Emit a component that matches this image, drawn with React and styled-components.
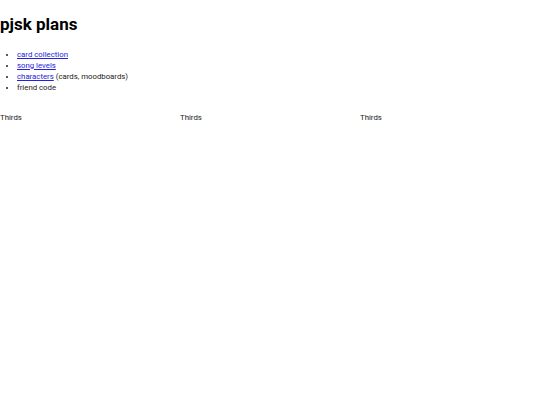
import React from "react";
import styled, { createGlobalStyle } from "styled-components";

const Global = createGlobalStyle`
  html, body { margin: 0; padding: 0; background: #fff; }
  body {
    font-family: Roboto, "DejaVu Sans", sans-serif;
    font-size: 7.8px;
    color: #222;
  }
`;

const Title = styled.h1`
  margin: 14px 0 0 0;
  font-size: 17px;
  font-weight: bold;
  line-height: 20px;
  color: #000;
`;

const List = styled.ul`
  margin: 15px 0 0 0;
  padding-left: 17px;
  line-height: 11px;
`;

const Item = styled.li``;

const Link = styled.a`
  color: #2222dd;
  text-decoration: underline;
`;

const Thirds = styled.div`
  display: grid;
  grid-template-columns: 1fr 1fr 1fr;
  margin-top: 19px;
  line-height: 11px;
`;

const Col = styled.div``;

export default function App() {
  return (
    <>
      <Global />
      <Title>pjsk plans</Title>
      <List>
        <Item><Link href="#">card collection</Link></Item>
        <Item><Link href="#">song levels</Link></Item>
        <Item><Link href="#">characters</Link> (cards, moodboards)</Item>
        <Item>friend code</Item>
      </List>
      <Thirds>
        <Col>Thirds</Col>
        <Col>Thirds</Col>
        <Col>Thirds</Col>
      </Thirds>
    </>
  );
}
